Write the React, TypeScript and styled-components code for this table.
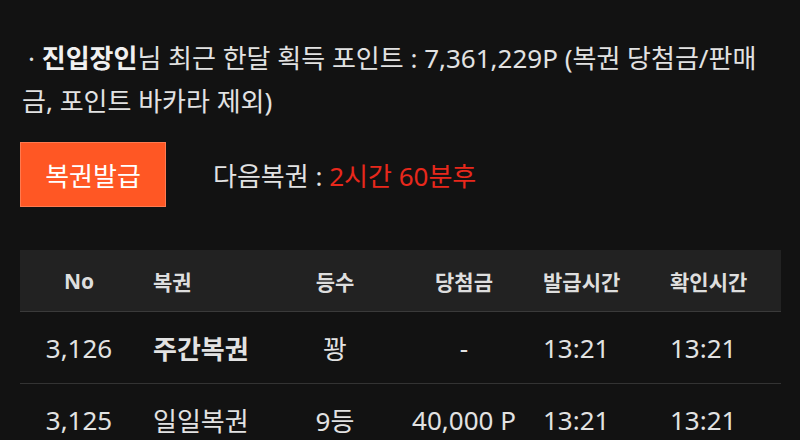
import React from "react";
import styled, { createGlobalStyle } from "styled-components";

const Global = createGlobalStyle`
  html, body { margin: 0; padding: 0; background: #121212; }
  html { overflow: hidden; }
  body { font-family: "Noto Sans", "Noto Sans CJK KR", sans-serif; color: #e2e2e2; }
`;

const Page = styled.div`
  width: 800px;
  box-sizing: border-box;
  padding: 0 19px 0 20px;
  margin-top: -30px;
`;

const Title = styled.div`
  font-size: 26px;
  line-height: 34px;
  font-weight: 700;
  padding-left: 2px;
  color: #e6e6e6;
`;

const Info = styled.p`
  margin: 33px 0 0;
  font-size: 26px;
  line-height: 43px;
  padding-left: 2px;
  text-indent: 6px;
  word-break: break-all;
  color: #e2e2e2;
`;

const Strong = styled.b`
  font-weight: 700;
  color: #f0f0f0;
`;

const ActionRow = styled.div`
  display: flex;
  align-items: center;
  gap: 47px;
  margin-top: 19px;
`;

const IssueButton = styled.button`
  width: 146px;
  height: 65px;
  border: 1px solid #ff7a50;
  background: #ff5724;
  color: #fff;
  font-family: inherit;
  font-size: 26px;
  padding: 0;
  cursor: pointer;
`;

const NextText = styled.div`
  font-size: 26px;
  color: #e2e2e2;
`;

const Red = styled.span`
  color: #e8281c;
`;

const Table = styled.div`
  margin-top: 43px;
  width: 761px;
`;

const Row = styled.div<{ $head?: boolean }>`
  display: grid;
  grid-template-columns: 118px 132px 130px 128px 127px 126px;
  align-items: center;
  height: ${(p) => (p.$head ? "61px" : "71px")};
  background: ${(p) => (p.$head ? "#222222" : "transparent")};
  border-bottom: 1px solid ${(p) => (p.$head ? "#3a3a3a" : "#333333")};
  font-size: ${(p) => (p.$head ? "21px" : "26px")};
  font-weight: ${(p) => (p.$head ? 700 : 400)};
  color: ${(p) => (p.$head ? "#dedede" : "#e2e2e2")};
`;

const Cell = styled.div<{ $left?: boolean; $bold?: boolean }>`
  text-align: ${(p) => (p.$left ? "left" : "center")};
  padding-left: ${(p) => (p.$left ? "15px" : "0")};
  font-weight: ${(p) => (p.$bold ? 700 : "inherit")};
  white-space: nowrap;
`;

const rows = [
  { no: "3,126", name: "주간복권", bold: true, rank: "꽝", prize: "-", issued: "13:21", checked: "13:21" },
  { no: "3,125", name: "일일복권", bold: false, rank: "9등", prize: "40,000 P", issued: "13:21", checked: "13:21" },
];

export default function App() {
  return (
    <>
      <Global />
      <Page>
        <Title>포인트 복권 발급 안내</Title>
        <Info>
          · <Strong>진입장인</Strong>님 최근 한달 획득 포인트 : 7,361,229P (복권 당첨금/판매금, 포인트 바카라 제외)
        </Info>
        <ActionRow>
          <IssueButton>복권발급</IssueButton>
          <NextText>
            다음복권 : <Red>2시간 60분후</Red>
          </NextText>
        </ActionRow>
        <Table>
          <Row $head>
            <Cell>No</Cell>
            <Cell $left>복권</Cell>
            <Cell>등수</Cell>
            <Cell>당첨금</Cell>
            <Cell $left>발급시간</Cell>
            <Cell $left>확인시간</Cell>
          </Row>
          {rows.map((r) => (
            <Row key={r.no}>
              <Cell>{r.no}</Cell>
              <Cell $left $bold={r.bold}>{r.name}</Cell>
              <Cell>{r.rank}</Cell>
              <Cell>{r.prize}</Cell>
              <Cell $left>{r.issued}</Cell>
              <Cell $left>{r.checked}</Cell>
            </Row>
          ))}
        </Table>
      </Page>
    </>
  );
}
